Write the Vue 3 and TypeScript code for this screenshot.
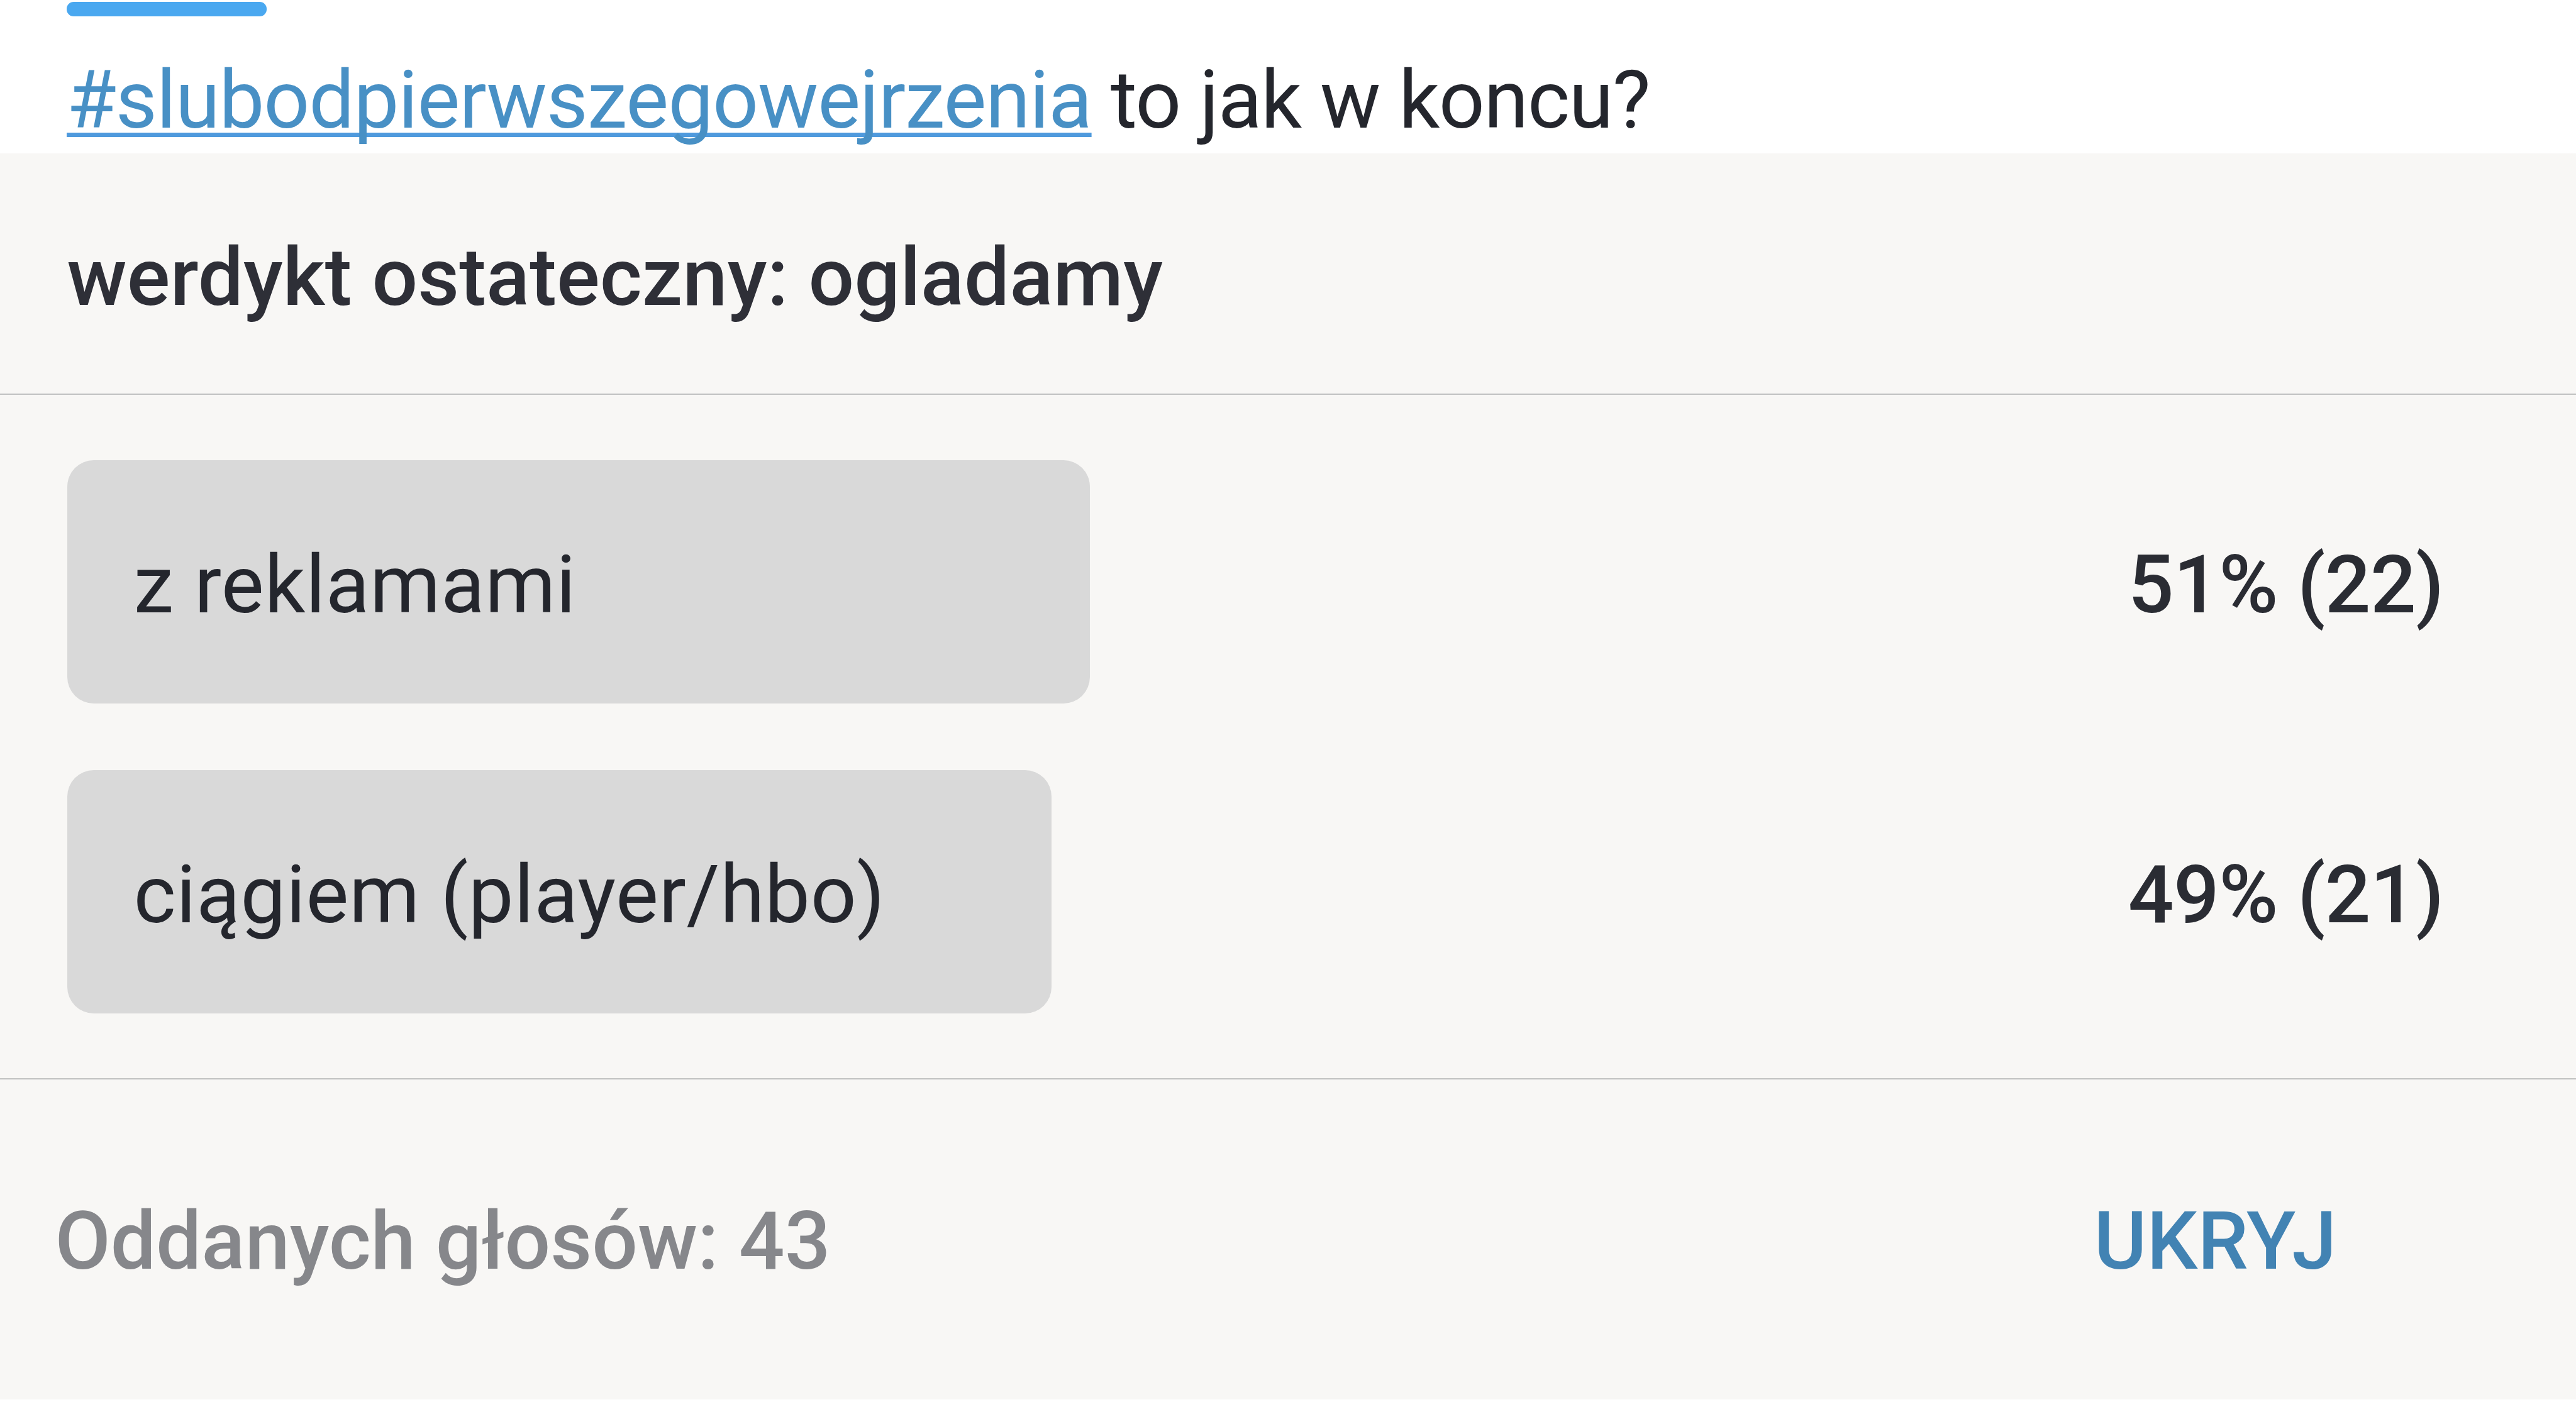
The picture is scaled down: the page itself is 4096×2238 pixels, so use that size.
<script setup lang="ts">
interface Option {
  label: string
  percent: number
  votes: number
  barWidth: number
}

const options: Option[] = [
  { label: 'z reklamami', percent: 51, votes: 22, barWidth: 1626 },
  { label: 'ciągiem (player/hbo)', percent: 49, votes: 21, barWidth: 1565 },
]

const total = options.reduce((sum, o) => sum + o.votes, 0)
</script>

<template>
  <article class="post">
    <header class="intro">
      <div class="accent"></div>
      <p class="text"><a class="tag">#slubodpierwszegowejrzenia</a> to jak w koncu?</p>
    </header>
    <section class="poll">
      <h2 class="question">werdykt ostateczny: ogladamy</h2>
      <ul class="options">
        <li v-for="o in options" :key="o.label" class="option">
          <div class="bar" :style="{ width: o.barWidth + 'px' }">
            <span class="label">{{ o.label }}</span>
          </div>
          <span class="result">{{ o.percent }}% ({{ o.votes }})</span>
        </li>
      </ul>
      <footer class="summary">
        <span class="total">Oddanych głosów: {{ total }}</span>
        <button class="hide" type="button">UKRYJ</button>
      </footer>
    </section>
  </article>
</template>

<style>
body {
  background: #fff;
}
</style>

<style scoped>
.post {
  width: 4096px;
  height: 2238px;
  overflow: hidden;
  box-sizing: border-box;
  background: #fff;
  font-family: Roboto, sans-serif;
  font-size: 128.2px;
  line-height: 150px;
  color: #24262d;
}

.intro {
  height: 243.5px;
  padding: 3px 0 0 106px;
  box-sizing: border-box;
}

.accent {
  width: 318px;
  height: 22.5px;
  border-radius: 11px;
  background: #4aa8f0;
}

.text {
  margin: 58.5px 0 0;
  letter-spacing: -1.4px;
  white-space: nowrap;
}

.tag {
  letter-spacing: -1.12px;
  color: #4890c5;
  text-decoration: underline;
  text-decoration-color: #4f9add;
  text-decoration-thickness: 7px;
  text-decoration-skip-ink: none;
  text-underline-offset: 8px;
}

.poll {
  height: 1982px;
  background: #f8f7f5;
}

.question {
  height: 384.5px;
  margin: 0;
  padding: 122px 106.5px 0;
  box-sizing: border-box;
  border-bottom: 2px solid #c0c1c1;
  font-size: inherit;
  font-weight: 500;
  letter-spacing: 0.08px;
  color: #2e2f37;
}

.options {
  display: flex;
  flex-direction: column;
  gap: 106.5px;
  height: 1089px;
  margin: 0;
  padding: 104px 210.5px 0 106.5px;
  box-sizing: border-box;
  border-bottom: 2px solid #c0c1c1;
  list-style: none;
}

.option {
  display: flex;
  align-items: center;
  justify-content: space-between;
  height: 386.5px;
}

.bar {
  display: flex;
  align-items: center;
  height: 100%;
  padding: 10px 0 0 106px;
  box-sizing: border-box;
  border-radius: 42px;
  background: #d9d9d9;
}

.label {
  letter-spacing: 0.57px;
  white-space: nowrap;
}

.result {
  padding-top: 10px;
  font-weight: 500;
  letter-spacing: -0.63px;
  color: #2a2c33;
}

.summary {
  display: flex;
  align-items: center;
  justify-content: space-between;
  height: 508px;
  padding: 6px 380.5px 0 87.5px;
  box-sizing: border-box;
  font-weight: 500;
}

.total {
  color: #86878b;
}

.hide {
  padding: 0;
  border: 0;
  background: none;
  font: inherit;
  color: #4283b3;
}
</style>
